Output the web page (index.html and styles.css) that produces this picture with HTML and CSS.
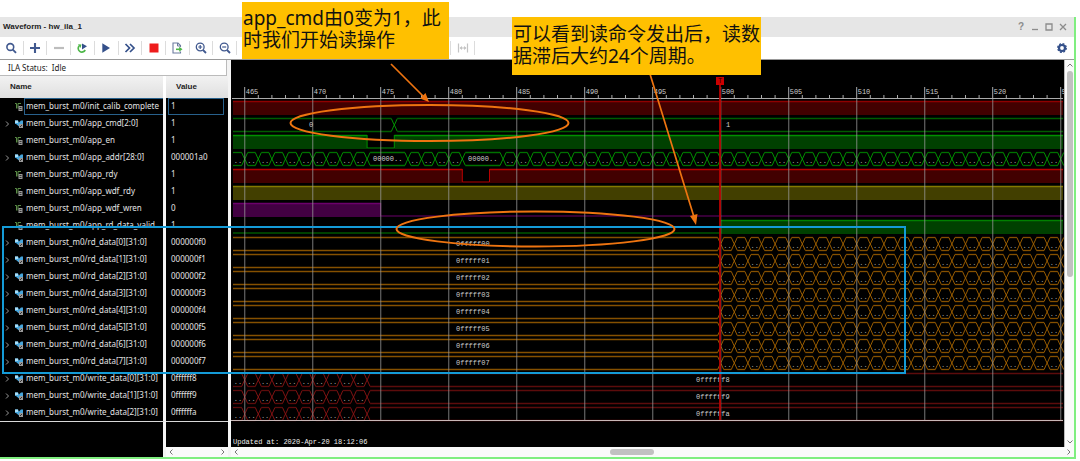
FILE: index.html
```html
<!DOCTYPE html>
<html lang="zh-CN">
<head>
<meta charset="utf-8">
<title>Waveform - hw_ila_1</title>
<link rel="stylesheet" href="styles.css">
</head>
<body>
<main class="stage">
  <section class="window">
    <header class="titlebar">
      <h1 class="title">Waveform - hw_ila_1</h1>
      <div class="window-controls">
        <button class="ctl" aria-label="Help">?</button>
        <button class="ctl" aria-label="Minimize"><svg width="8" height="8"><path d="M1 6.5h6" stroke="#8c8c8c" stroke-width="1.3"/></svg></button>
        <button class="ctl" aria-label="Maximize"><svg width="8" height="8"><path d="M1 1h6v6H1z" fill="none" stroke="#8c8c8c" stroke-width="1.3"/></svg></button>
        <button class="ctl" aria-label="Close"><svg width="8" height="8"><path d="M1 1l6 6M7 1L1 7" stroke="#8c8c8c" stroke-width="1.3"/></svg></button>
      </div>
    </header>

    <nav class="toolbar">
      <div class="tools">
        <button class="tool" aria-label="Find"><svg width="12" height="12"><circle cx="5.3" cy="5" r="3.4" fill="none" stroke="#41598f" stroke-width="1.6"/><path d="M7.8 7.6L11 10.8" stroke="#41598f" stroke-width="1.9"/></svg></button>
        <button class="tool" aria-label="Add"><svg width="12" height="12"><path d="M6 1v10M1 6h10" stroke="#41598f" stroke-width="2.1"/></svg></button>
        <button class="tool" aria-label="Remove"><svg width="12" height="12"><path d="M1 6h10" stroke="#bdbdbd" stroke-width="2.2"/></svg></button>
        <button class="tool" aria-label="Auto re-trigger"><svg width="12" height="12"><path d="M3.200 3.800A3.700 3.700 0 1 0 9.200 8" fill="none" stroke="#4db748" stroke-width="1.700"/><path d="M2 2.200L5.500 2.500L4.500 6z" fill="#4db748"/><path d="M6 1.400L11 4.200L6 7.400z" fill="#34508a"/></svg></button>
        <button class="tool" aria-label="Run"><svg width="12" height="12"><path d="M2.3 1.3L10 6L2.3 10.7z" fill="#34508a"/></svg></button>
        <button class="tool" aria-label="Run immediate"><svg width="12" height="12"><path d="M1.5 2L5.5 6L1.5 10M6 2L10 6L6 10" fill="none" stroke="#34508a" stroke-width="1.7"/></svg></button>
        <button class="tool" aria-label="Stop"><svg width="12" height="12"><path d="M1.5 1.5h9v9h-9z" fill="#ee1c1c"/></svg></button>
        <button class="tool" aria-label="Export"><svg width="12" height="12"><path d="M9.5 5V3.5L7 1H2v10h7.5V9.500" fill="none" stroke="#6c7c9f" stroke-width="1.1"/><path d="M6.500 1v3h3" fill="none" stroke="#6c7c9f"/><path d="M5 7.300h4" stroke="#4db748" stroke-width="1.6"/><path d="M8.200 4.800L11.500 7.300L8.200 9.800z" fill="#4db748"/></svg></button>
        <button class="tool" aria-label="Zoom in"><svg width="12" height="12"><circle cx="5.2" cy="5" r="3.9" fill="none" stroke="#41598f" stroke-width="1.3"/><path d="M8 8L11 11" stroke="#41598f" stroke-width="1.8"/><path d="M3.200 5h4M5.200 3v4" stroke="#41598f" stroke-width="1.200"/></svg></button>
        <button class="tool" aria-label="Zoom out"><svg width="12" height="12"><circle cx="5.2" cy="5" r="3.9" fill="none" stroke="#41598f" stroke-width="1.3"/><path d="M8 8L11 11" stroke="#41598f" stroke-width="1.8"/><path d="M3.200 5h4" stroke="#41598f" stroke-width="1.200"/></svg></button>
      </div>
      <div class="tools-end">
        <button class="tool fit" aria-label="Fit markers" disabled><svg width="12" height="12"><path d="M1.500 1.500v9M10.500 1.500v9M3 6h6" fill="none" stroke="#c4c4c4" stroke-width="1.200"/><path d="M5 4L2.500 6L5 8zM7 4L9.500 6L7 8z" fill="#c4c4c4"/></svg></button>
      </div>
      <button class="tool settings" aria-label="Settings"><svg width="12" height="12"><circle cx="6" cy="6" r="3" fill="none" stroke="#34508a" stroke-width="2.200"/><circle cx="6" cy="6" r="4.300" fill="none" stroke="#34508a" stroke-width="1.300" stroke-dasharray="1.900 1.477"/></svg></button>
    </nav>

    <div class="body">
      <div class="signals">
        <p class="status">ILA Status:&nbsp; Idle</p>
        <table class="signal-table">
          <thead><tr><th class="name-col" scope="col">Name</th><th class="value-col" scope="col">Value</th></tr></thead>
          <tbody id="signal-rows"></tbody>
        </table>
        <div class="below">
          <div class="below-name"></div>
          <div class="below-value">
            <div class="hbar"><svg width="6" height="8"><path d="M4.500 1.500L2 4L4.500 6.500" class="arrow"/></svg><svg width="6" height="8"><path d="M1.500 1.500L4 4L1.500 6.500" class="arrow"/></svg></div>
          </div>
        </div>
      </div>

      <div class="wave-pane">
        <div class="wave-row">
          <svg class="wave" id="wave" role="img" aria-label="Waveform"></svg>
          <div class="vbar">
            <svg width="8" height="6"><path d="M1.500 4.500L4 2L6.500 4.500" class="arrow"/></svg>
            <div class="vtrack"><div class="vthumb"></div></div>
            <svg width="8" height="6"><path d="M1.500 1.500L4 4L6.500 1.500" class="arrow"/></svg>
          </div>
        </div>
        <div class="hbar">
          <svg width="6" height="8"><path d="M4.500 1.500L2 4L4.500 6.500" class="arrow"/></svg>
          <div class="hthumb"></div>
          <svg width="6" height="8"><path d="M1.500 1.500L4 4L1.500 6.500" class="arrow"/></svg>
        </div>
      </div>
    </div>
  </section>

  <svg class="marks" aria-hidden="true">
    <rect x="3" y="227" width="902" height="146" fill="none" stroke="#149bd7" stroke-width="2"/>
    <g fill="none" stroke="#ee7410" stroke-width="2">
      <ellipse cx="429.500" cy="123" rx="139" ry="18"/>
      <ellipse cx="535.500" cy="229" rx="139" ry="17.500"/>
      <path d="M391 64L424 97M650 74L694 217" stroke-width="1.700"/>
    </g>
    <path d="M429 102L420 98.500L425.500 93zM696 225L690 216L697.500 214z" fill="#ee7410"/>
  </svg>
  <aside class="note note-cmd">app_cmd由0变为1，此<br>时我们开始读操作</aside>
  <aside class="note note-delay">可以看到读命令发出后，读数<br>据滞后大约24个周期。</aside>
</main>
<script src="wave.js"></script>
</body>
</html>
```

FILE: styles.css
```css
* { box-sizing: border-box; }

body {
  margin: 0;
  background: #fff;
  font-family: "Noto Sans", "Noto Sans CJK SC", sans-serif;
  font-size: 8px;
  line-height: 16px;
  color: #222;
}

button {
  border: 0;
  padding: 0;
  background: none;
  font: inherit;
  color: inherit;
}

.stage {
  position: relative;
  height: 100vh;
  padding: 17px 4px 2px 0;
  overflow: hidden;
}

.window {
  display: flex;
  flex-direction: column;
  height: 100%;
  border-right: 2px solid #80ee80;
  border-bottom: 2px solid #80ee80;
}

.titlebar {
  display: flex;
  align-items: center;
  justify-content: space-between;
  height: 20px;
  flex: none;
  padding: 0 5px 0 3px;
  background: #e6e6e6;
}

.title {
  margin: 0;
  font: bold 8px/16px "Liberation Sans", Arial, sans-serif;
}

.window-controls { display: flex; gap: 2px; }

.ctl {
  display: grid;
  place-items: center;
  width: 12px;
  height: 16px;
  font: bold 10px/16px "Liberation Sans", Arial, sans-serif;
  color: #8c8c8c;
}

.toolbar {
  display: flex;
  align-items: center;
  height: 23px;
  flex: none;
  border-bottom: 1px solid #999;
}

.tools {
  display: grid;
  grid-template-columns: repeat(10, 1fr);
  width: 237px;
}

.tool {
  display: grid;
  place-items: center;
  height: 14px;
  border-right: 1px solid #dcdcdc;
}

.tools-end { margin-left: 213px; }

.fit { width: 25px; border-left: 1px solid #dcdcdc; }

.settings { width: 14px; margin-left: auto; margin-right: 5px; border: 0; }

.body { display: flex; flex: 1; min-height: 0; }

.signals {
  display: flex;
  flex-direction: column;
  width: 231px;
  flex: none;
  padding-right: 3px;
  background: #f4f4f4;
}

.status {
  height: 16px;
  margin: 0 1px 0 0;
  padding-left: 8px;
  border: 1px solid #bbb;
  border-left: 0;
  border-top: 0;
  background: #fff;
}

.signal-table {
  width: 100%;
  table-layout: fixed;
  border-collapse: separate;
  border-spacing: 0;
  background: #000;
  color: #e4e4e4;
}

.signal-table th {
  height: 22px;
  padding: 0 0 0 10px;
  text-align: left;
  color: #222;
  font: bold 8px/20px "Liberation Sans", Arial, sans-serif;
  background: linear-gradient(#f2f2f2, #dfdfdf);
}

.signal-table .name-col { width: 166px; border-right: 3px solid #fff; }

.signal-table td {
  height: 17px;
  padding: 0;
  line-height: 13px;
  white-space: nowrap;
}

.signal-table td:first-child { border-right: 3px solid #f4f4f4; }

.signal {
  display: flex;
  align-items: center;
  height: 17px;
}

.expander { width: 14px; height: 12px; flex: none; display: grid; place-items: center; }

.signal-icon { width: 10px; flex: none; }

.label { flex: 1; height: 17px; padding-left: 1px; border: 1px solid transparent; border-right: 0; overflow: hidden; }

.value { height: 17px; margin: 0 4px 0 2px; padding-left: 2px; border: 1px solid transparent; }

.selected .label, .selected .value { border-color: #28618c; }

.below { display: flex; flex: 1; min-height: 0; background: #000; }

.below-name { width: 166px; border-right: 3px solid #f4f4f4; border-top: 1px solid #d8d8d8; }

.below-value {
  display: flex;
  flex: 1;
  flex-direction: column;
  justify-content: flex-end;
  border-top: 1px solid #d8d8d8;
}

.wave-pane { display: flex; flex: 1; min-width: 0; flex-direction: column; background: #000; }

.wave-row { display: flex; flex: 1; min-height: 0; }

.wave { display: block; flex: 1; min-width: 0; height: 100%; font: 7px "Liberation Mono", monospace; }

.hbar {
  display: flex;
  align-items: center;
  justify-content: space-between;
  height: 10px;
  flex: none;
  padding: 0 2px;
  background: #fafafa;
}

.vbar {
  display: flex;
  flex-direction: column;
  align-items: center;
  width: 10px;
  flex: none;
  padding: 2px 0;
  border-left: 1px solid #bbb;
  background: #fafafa;
}

.vtrack { flex: 1; padding-top: 3px; }

.vthumb { width: 6px; height: 56%; border-radius: 3px; background: #c1c1c1; }

.hthumb { width: 44px; height: 6px; border-radius: 3px; margin-right: 5%; background: #c1c1c1; }

.arrow { fill: none; stroke: #777; stroke-width: 1; }

.marks {
  position: absolute;
  inset: 0;
  width: 100%;
  height: 100%;
  pointer-events: none;
}

.note {
  position: absolute;
  padding: 0 0 0 1px;
  background: #ffc000;
  color: #111;
  font-size: 19px;
  line-height: 22px;
  white-space: nowrap;
}

.note-cmd { left: 242px; top: 2px; width: 207px; height: 57px; padding-top: 5px; }

.note-delay { left: 512px; top: 17px; width: 249px; height: 58px; padding-top: 6px; }
```

FILE: wave.js
```javascript
const PERIOD = 13.6;
const FIRST = 465;
const ORIGIN = 13.7;
const ROW = 17;
const TOP = 41;
const H = 13;

const range = (a, b) => Array.from({ length: b - a + 1 }, (_, i) => a + i);

const signals = [
  { name: "init_calib_complete", value: "1", color: "#900000", fill: "#420000" },
  { name: "app_cmd[2:0]", value: "1", bus: [476], color: "#005c00", cross: "#00a000", labels: [[78, "0"], [495, "1"]] },
  { name: "app_en", value: "1", color: "#009000", fill: "#004000", low: [474, 476] },
  { name: "app_addr[28:0]", value: "000001a0", bus: [...range(465, 474), ...range(477, 481), ...range(484, 526)], color: "#007000", cross: "#00a000", labels: [[142, "00000.."], [237, "00000.."]] },
  { name: "app_rdy", value: "1", color: "#b80000", fill: "#420000", low: [481, 483] },
  { name: "app_wdf_rdy", value: "1", color: "#857a00", fill: "#423f00" },
  { name: "app_wdf_wren", value: "0", color: "#6c006c", fill: "#420042", low: [475, 999] },
  { name: "app_rd_data_valid", value: "1", color: "#008000", fill: "#004000", low: [400, 500] },
  ...range(0, 7).map(i => ({ name: `rd_data[${i}][31:0]`, value: `000000f${i}`, bus: range(500, 526), color: "#855000", cross: "#a86500", labels: [[225, `0fffff0${i}`]] })),
  ...["8", "9", "a"].map((d, i) => ({ name: `write_data[${i}][31:0]`, value: `0ffffff${d}`, bus: range(465, 474), color: "#5c0c0c", cross: "#8c1414", labels: [[465, `0ffffff${d}`]] }))
];

const chevron = '<svg width="5" height="8"><path d="M1 1.500L3.500 4L1 6.500" fill="none" stroke="#999"/></svg>';
const busIcon = '<svg class="signal-icon" width="10" height="10"><path d="M1 1.500h3l1 2l2-2h2v4.500H7L5 7.500L2 5H1z" fill="#48a6dc"/><path d="M1 1.500h3v2.500H1z" fill="#a9dcf5"/><path d="M5 5h4v4H5z" fill="#9a9a9a"/><path d="M6 8l2-2" stroke="#333"/></svg>';
const bitIcon = '<svg class="signal-icon" width="10" height="10"><path d="M1 1.500h1.500v5M4 6.500v-5h3" fill="none" stroke="#5b8d46"/><path d="M4.500 4h4v5h-4z" fill="#999"/><path d="M5.500 5.500h2M5.500 7.500h2" stroke="#333"/></svg>';

document.getElementById("signal-rows").innerHTML = signals.map((s, i) => `
  <tr class="${i === 0 ? "selected" : ""}">
    <td><div class="signal">${s.bus ? `<button class="expander" aria-label="Expand ${s.name}">${chevron}</button>${busIcon}` : `<span class="expander"></span>${bitIcon}`}<span class="label">mem_burst_m0/${s.name}</span></div></td>
    <td><div class="value">${s.value}</div></td>
  </tr>`).join("");

const svg = document.getElementById("wave");
const timeX = t => ORIGIN + (t - FIRST) * PERIOD;

function line(x1, y1, x2, y2, color, width = 1) {
  return `<path d="M${x1} ${y1}L${x2} ${y2}" stroke="${color}" stroke-width="${width}"/>`;
}

function text(x, y, value, color = "#ccc") {
  return `<text x="${x}" y="${y}" fill="${color}">${value}</text>`;
}

function drawBit(s, y, end) {
  const lo = s.low ? Math.max(2, timeX(s.low[0])) : end;
  const hi = s.low ? Math.min(end, timeX(s.low[1])) : end;
  let out = "";
  for (const [a, b] of [[2, lo], [hi, end]]) {
    if (b > a) out += `<rect x="${a}" y="${y}" width="${b - a}" height="${H + 1}" fill="${s.fill}"/>` + line(a, y + 0.5, b, y + 0.5, s.color, 1.5);
  }
  if (hi > lo) {
    out += line(lo, y + H, hi, y + H, s.color);
    if (lo > 2) out += line(lo, y, lo, y + H, s.color);
    if (hi < end) out += line(hi, y, hi, y + H, s.color);
  }
  return out;
}

function drawBus(s, y, end) {
  const edges = s.bus.map(timeX).filter(x => x < end);
  const t = y + 0.5;
  const b = y + H + 0.5;
  const m = (t + b) / 2;
  let out = "";
  let from = 2;
  for (const x of [...edges, end + 3]) {
    const to = Math.min(x - 3, end);
    if (to > from) out += line(from, t, to, t, s.color, 1.3) + line(from, b, to, b, s.color, 1.3);
    if (x < end) {
      if (x - from < 14) out += text(x - 11, y + 11, "..", "#aaa");
      out += `<path d="M${x - 3} ${t}L${x - 1} ${m - 2}L${x + 1} ${m + 2}L${x + 3} ${b}M${x - 3} ${b}L${x - 1} ${m + 2}L${x + 1} ${m - 2}L${x + 3} ${t}" fill="none" stroke="${s.cross}" stroke-width="0.9"/>`;
    }
    from = x + 3;
  }
  return out;
}

function draw() {
  const end = svg.clientWidth - 1;
  const bottom = TOP + signals.length * ROW - 4;
  const height = svg.clientHeight;
  let out = "";
  signals.forEach((s, i) => {
    const y = TOP + i * ROW;
    out += s.bus ? drawBus(s, y, end) : drawBit(s, y, end);
  });
  for (let t = FIRST; timeX(t) < end; t++) {
    const x = timeX(t);
    if (t % 5 === 0) {
      out += line(x, 27, x, 38, "#aaa") + `<path d="M${x} 38V${bottom}" stroke="#999" stroke-opacity="0.6" stroke-width="1.3"/>` + text(x + 1, 34, t, "#ccc");
    } else {
      out += line(x, 35, x, 38, "#aaa");
    }
  }
  out += line(1, 38.5, end, 38.5, "#aaa") + line(0, 360.5, end, 360.5, "#c8b8b8");
  signals.forEach((s, i) => {
    for (const [x, label] of s.labels || []) out += text(x, TOP + i * ROW + 9, label);
  });
  const trigger = timeX(500) - 0.7;
  out += line(trigger, 20, trigger, bottom, "#b80000", 1.8);
  out += `<rect x="${trigger - 4}" y="17" width="8" height="8" fill="#cc0000"/>` + text(trigger - 2, 23, "T", "#300");
  out += text(2, height - 3, "Updated at: 2020-Apr-20 18:12:06", "#eee");
  svg.innerHTML = out;
}

draw();
window.addEventListener("resize", draw);
```
